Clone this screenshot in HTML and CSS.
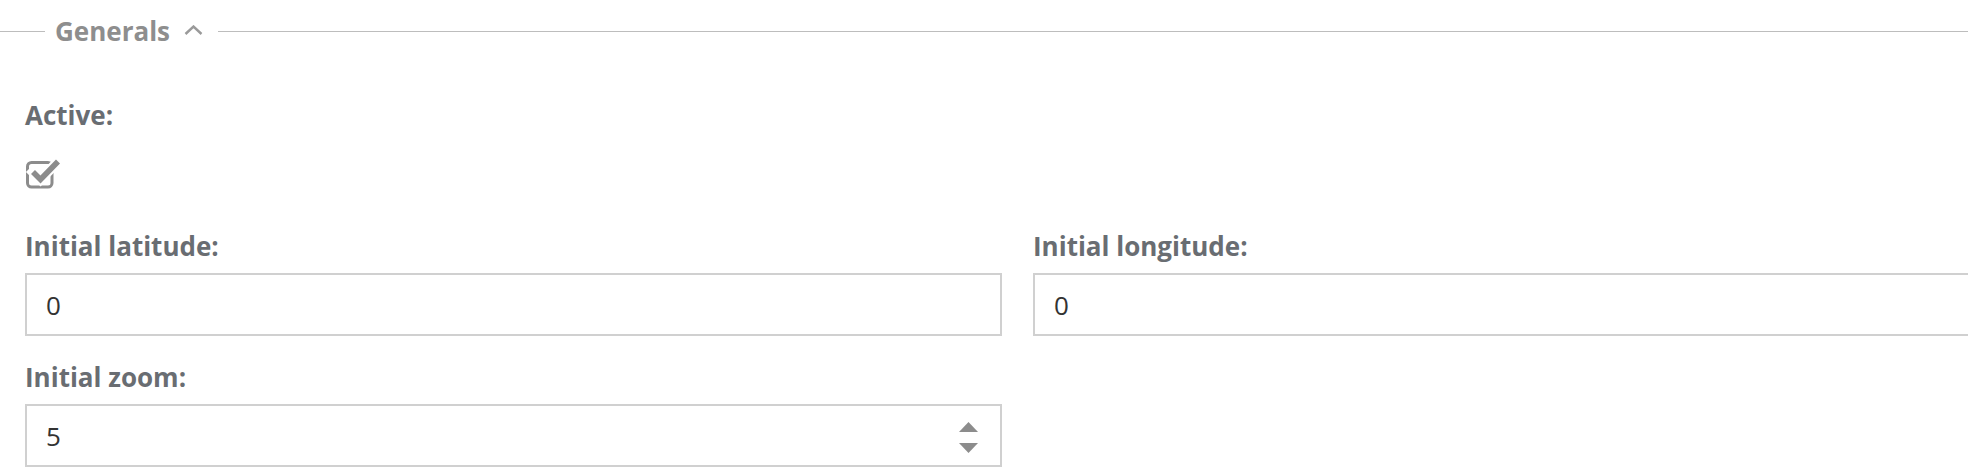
FILE: index.html
```html
<!DOCTYPE html>
<html>
<head>
<meta charset="utf-8">
<link rel="stylesheet" href="styles.css">
</head>
<body>
<section class="fieldset">
  <div class="legend">
    <span class="rule rule-left"></span>
    <span class="legend-title">Generals</span>
    <svg class="chevron" width="19" height="10" viewBox="0 0 19 10"><path d="M1.5 9 L9.5 1.5 L17.5 9" fill="none" stroke="#9a9a9a" stroke-width="2.4"/></svg>
    <span class="rule rule-right"></span>
  </div>
  <div class="content">
    <div class="field">
      <div class="label">Active:</div>
      <div class="check-wrap">
        <svg class="check" width="36" height="36" viewBox="0 0 36 36">
          <rect x="2.5" y="8.5" width="24.5" height="24.5" rx="4" ry="4" fill="none" stroke="#8c8c8c" stroke-width="3"/>
          <path d="M8 18 L15.5 25.5 L33 7.5" fill="none" stroke="#ffffff" stroke-width="10" stroke-linecap="square"/>
          <path d="M8 18 L15.5 25.5 L33 7.5" fill="none" stroke="#8c8c8c" stroke-width="5.6" stroke-linecap="butt"/>
        </svg>
      </div>
    </div>
    <div class="grid">
      <div class="field">
        <div class="label">Initial latitude:</div>
        <div class="input">0</div>
      </div>
      <div class="field">
        <div class="label">Initial longitude:</div>
        <div class="input">0</div>
      </div>
      <div class="field field-zoom">
        <div class="label">Initial zoom:</div>
        <div class="input input-number">
          <span>5</span>
          <span class="spinner">
            <svg width="19" height="31" viewBox="0 0 19 31"><path d="M9.5 0 L19 10 L0 10 Z" fill="#8c8c8c"/><path d="M0 21 L19 21 L9.5 31 Z" fill="#8c8c8c"/></svg>
          </span>
        </div>
      </div>
    </div>
  </div>
</section>
</body>
</html>
```

FILE: styles.css
```css
html, body {
  margin: 0;
  padding: 0;
  background: #ffffff;
  overflow: hidden;
}
body {
  font-family: "Open Sans", "Liberation Sans", sans-serif;
  width: 1968px;
  height: 476px;
}
.legend {
  height: 62px;
  display: flex;
  align-items: center;
}
.rule {
  height: 0;
  border-top: 1.5px solid #bdbdbd;
}
.rule-left {
  width: 45px;
  flex: none;
}
.rule-right {
  flex: 1;
}
.legend-title {
  font-size: 26px;
  font-weight: 700;
  color: #8e8e8e;
  padding: 0 14px 0 10px;
  line-height: 34px;
}
.chevron {
  display: block;
  margin-right: 15px;
  margin-top: -2px;
}
.content {
  padding: 37px 0 0 25px;
}
.label {
  font-size: 26px;
  font-weight: 700;
  color: #696d72;
  line-height: 33px;
  height: 33px;
}
.check-wrap {
  height: 96px;
  padding-top: 22px;
  box-sizing: border-box;
}
.check {
  display: block;
}
.grid {
  display: grid;
  grid-template-columns: 977px 977px;
  column-gap: 31px;
}
.grid .field .label {
  padding-top: 2px;
  margin-bottom: 10px;
}
.field-zoom {
  margin-top: 23px;
}
.input {
  box-sizing: border-box;
  height: 63px;
  border: 2px solid #d0d0d0;
  padding: 0 19px;
  font-size: 26px;
  color: #333333;
  display: flex;
  align-items: center;
  justify-content: space-between;
}
.spinner {
  display: flex;
  margin-right: 3px;
  margin-top: 4px;
}
.spinner svg {
  display: block;
}
```
